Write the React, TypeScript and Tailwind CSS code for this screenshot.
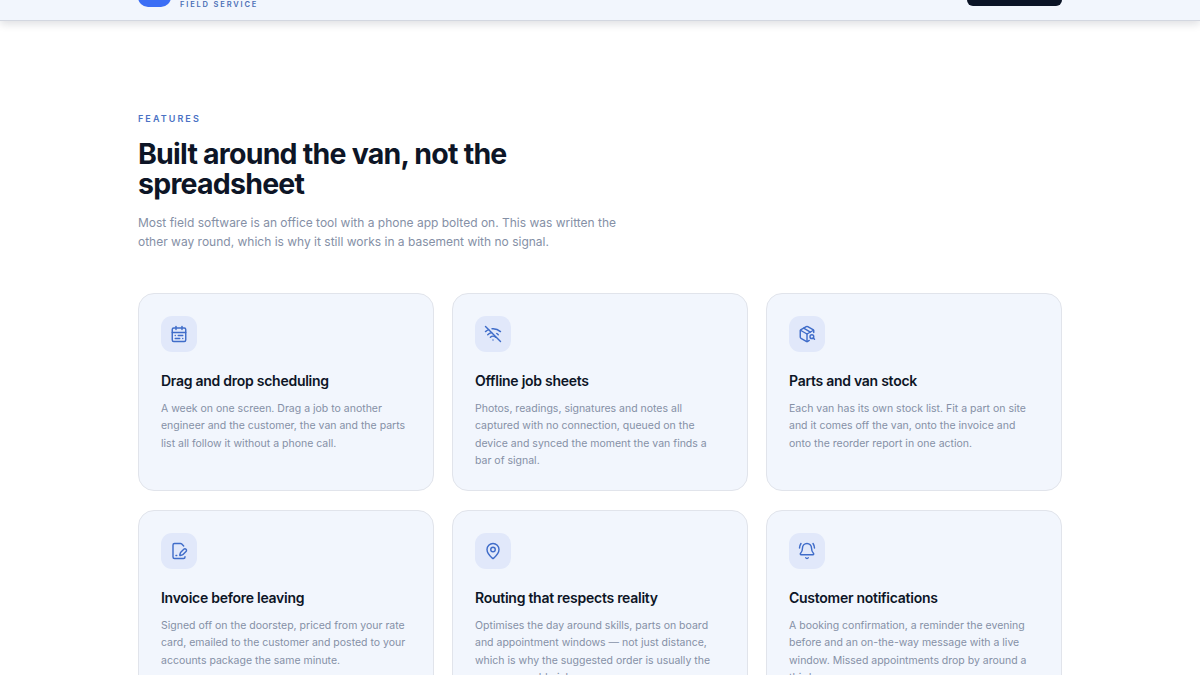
import React from 'react';
import { CalendarRange, WifiOff, PackageSearch, FileSignature, MapPin, BellRing } from 'lucide-react';

const features = [
  {
    icon: CalendarRange,
    title: 'Drag and drop scheduling',
    body: 'A week on one screen. Drag a job to another engineer and the customer, the van and the parts list all follow it without a phone call.',
  },
  {
    icon: WifiOff,
    title: 'Offline job sheets',
    body: 'Photos, readings, signatures and notes all captured with no connection, queued on the device and synced the moment the van finds a bar of signal.',
  },
  {
    icon: PackageSearch,
    title: 'Parts and van stock',
    body: 'Each van has its own stock list. Fit a part on site and it comes off the van, onto the invoice and onto the reorder report in one action.',
  },
  {
    icon: FileSignature,
    title: 'Invoice before leaving',
    body: 'Signed off on the doorstep, priced from your rate card, emailed to the customer and posted to your accounts package the same minute.',
  },
  {
    icon: MapPin,
    title: 'Routing that respects reality',
    body: 'Optimises the day around skills, parts on board and appointment windows — not just distance, which is why the suggested order is usually the one you would pick.',
  },
  {
    icon: BellRing,
    title: 'Customer notifications',
    body: 'A booking confirmation, a reminder the evening before and an on-the-way message with a live window. Missed appointments drop by around a third.',
  },
];

const App: React.FC = () => {
  return (
    <div className="h-[675px] overflow-hidden bg-white font-['Inter',sans-serif]">
      {/* page is scrolled, only the bottom of the header shows */}
      <header className="h-[21px] bg-[#f2f6fd] border-b border-[#d3d7e0] shadow-[0_3px_8px_rgba(15,23,42,0.14)] relative">
        <div className="mx-auto w-[924px] h-[20px] flex justify-between items-start">
          <div className="flex items-start gap-[9px] -mt-[26px]">
            <div className="w-[33px] h-[33px] rounded-[10px] bg-[#3b6ef5]" />
            <div className="pt-[26px] text-[7.5px] leading-[9px] font-semibold tracking-[0.245em] text-[#4a6fb5]">FIELD SERVICE</div>
          </div>
          <div className="w-[95px] h-[6px] rounded-b-[6px] bg-[#0b1426]" />
        </div>
      </header>

      <main className="mx-auto w-[924px] pt-[92px]">
        <div className="text-[9px] leading-[11px] font-semibold tracking-[0.23em] text-[#4a72c4]">FEATURES</div>
        <h2 className="mt-[15px] w-[440px] text-[28.5px] leading-[30px] font-bold tracking-[-0.027em] text-[#0d1526]">
          Built around the van, not the spreadsheet
        </h2>
        <p className="mt-[14px] w-[490px] text-[12px] leading-[19px] text-[#8590a6]">
          Most field software is an office tool with a phone app bolted on. This was written the other way round, which is why it still works in a basement with no signal.
        </p>

        <div className="mt-[42px] grid grid-cols-3 gap-x-[18px] gap-y-[19px]">
          {features.map((f) => {
            const Icon = f.icon;
            return (
              <div key={f.title} className="h-[198px] rounded-[16px] border border-[#e1e4eb] bg-[#f2f6fd] px-[22px] pt-[22px]">
                <div className="w-[36px] h-[36px] rounded-[11px] bg-[#e1e8fa] flex items-center justify-center">
                  <Icon className="w-[18px] h-[18px] text-[#3f6cc9]" strokeWidth={1.9} />
                </div>
                <h3 className="mt-[19px] text-[14px] leading-[20px] font-semibold tracking-[-0.019em] text-[#0d1526]">{f.title}</h3>
                <p className="mt-[9px] text-[10.5px] leading-[17.33px] text-[#8590a6]">{f.body}</p>
              </div>
            );
          })}
        </div>
      </main>
    </div>
  );
};

export default App;
